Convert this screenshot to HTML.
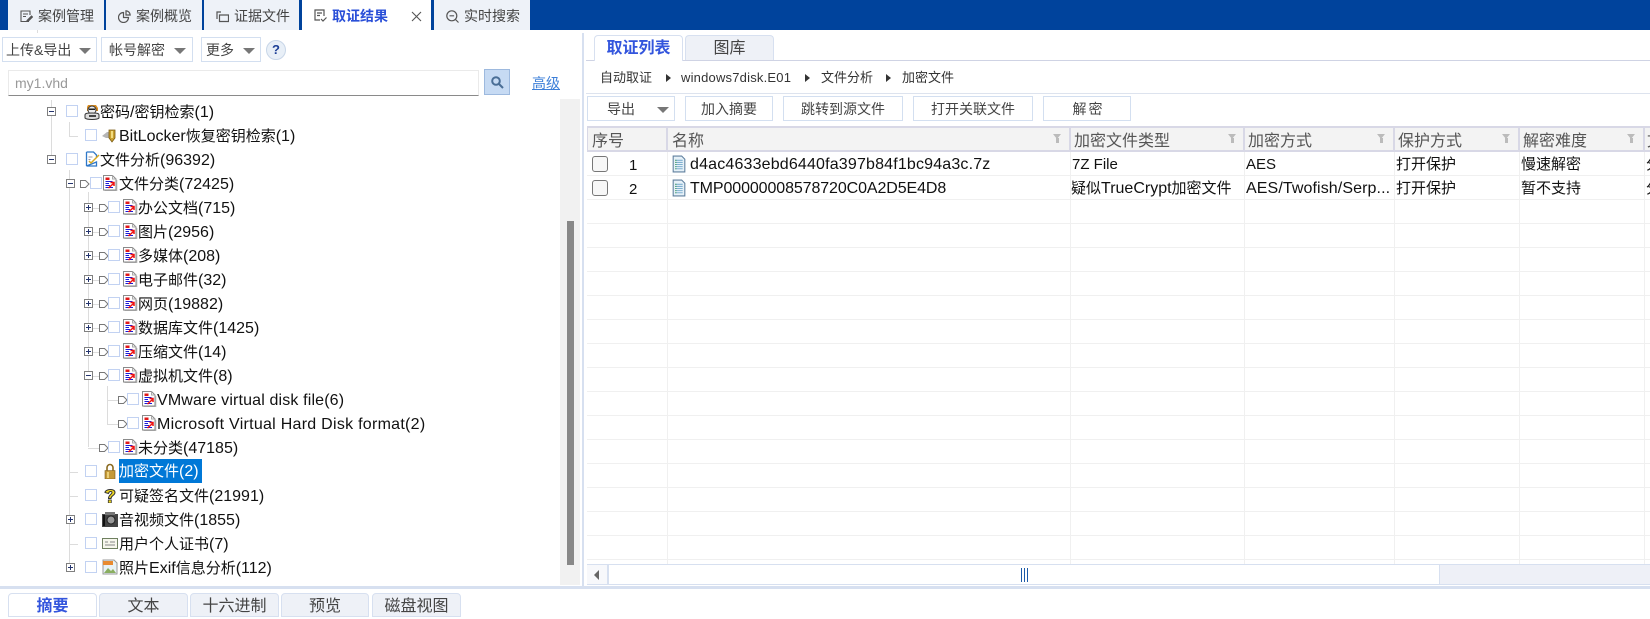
<!DOCTYPE html>
<html lang="zh">
<head>
<meta charset="utf-8">
<title>取证结果</title>
<style>
html,body{margin:0;padding:0;background:#fff;}
body{width:1650px;height:612px;overflow:hidden;position:relative;font-family:"Liberation Sans","Noto Sans CJK SC",sans-serif;color:#222;}
.a{position:absolute;}
.t{position:absolute;white-space:nowrap;}
.tab{position:absolute;top:0;height:30px;background:#eef2f8;}
.tt{position:absolute;top:0;height:32px;line-height:32px;font-size:14px;color:#444;white-space:nowrap;}
.btn{position:absolute;border:1px solid #d3dff0;background:#fff;box-sizing:border-box;font-size:14px;color:#444;white-space:nowrap;}
.tri{position:absolute;width:0;height:0;border-left:6px solid transparent;border-right:6px solid transparent;border-top:6px solid #777;}
.r{position:absolute;height:24px;line-height:24px;font-size:15px;color:#111;white-space:nowrap;margin-top:1px;}
em{font-style:normal;font-size:16px;}
.cb{position:absolute;width:10px;height:10px;border:1px solid #c2d2f2;background:#fff;box-sizing:content-box;}
.pm{position:absolute;width:7px;height:7px;border:1px solid #808080;background:#fff;}
.pm:before{content:"";position:absolute;left:1px;top:3px;width:5px;height:1px;background:#24346e;}
.pm.p:after{content:"";position:absolute;left:3px;top:1px;width:1px;height:5px;background:#24346e;}
.hl{position:absolute;background:#dcdcdc;}
.ic{position:absolute;width:16px;height:16px;}
.th{position:absolute;top:126px;height:26px;line-height:27px;font-size:16px;color:#555;background:#f3f3f3;border-top:2px solid #d8d8e6;border-bottom:2px solid #d8d8e6;box-sizing:border-box;white-space:nowrap;}
.fl{position:absolute;top:6px;width:0;height:0;border-left:4.5px solid transparent;border-right:4.5px solid transparent;border-top:5px solid #bbb;}
.fl:after{content:"";position:absolute;left:-1.500px;top:-1px;width:3px;height:5px;background:#bbb;}
.c{position:absolute;height:24px;line-height:24px;font-size:15px;color:#111;white-space:nowrap;overflow:hidden;}
.g{position:absolute;background:#f0f0f0;}
.btab{position:absolute;top:593px;height:24px;border:1px solid #d7e0f0;border-radius:4px 4px 0 0;background:#eef1f7;box-sizing:border-box;text-align:center;font-size:16px;line-height:25px;color:#444;}
</style>
</head>
<body>
<svg width="0" height="0" style="position:absolute">
<defs>
<symbol id="doc" viewBox="0 0 16 16">
<path d="M1.500.5h9l3.500 3.500v11H1.500z" fill="#fff" stroke="#8a8a8a"/>
<path d="M14.800 5v11H2.500" fill="none" stroke="#b5b5b5"/>
<path d="M10.500.5v3.500H14" fill="none" stroke="#aaa"/>
<path d="M3.500 2.500h4v2.500h-4z" fill="#e01818"/>
<path d="M3.500 6.500h7M3.500 8.500h3.500M3.500 10.500h4.500M3.500 12.500h7.500" stroke="#1a1ad8" stroke-width="1"/>
<path d="M6.500 13l5-4.500M8.500 7.500h3.500v3.500" fill="none" stroke="#ee1111" stroke-width="1.500"/>
</symbol>
<symbol id="ar" viewBox="0 0 10 10">
<path d="M.5 1.500h5l3.500 3.500-3.500 3.500h-5z" fill="#fff" stroke="#777"/>
</symbol>
<symbol id="fdoc" viewBox="0 0 13 17">
<path d="M1 1h8l3 3v12H1z" fill="#e6f1f8" stroke="#5f7f9e"/>
<path d="M3 5h7M3 7h7M3 9h7M3 11h7M3 13h7" stroke="#7fb0d0"/>
<path d="M3 5h1M3 7h1M3 9h1M3 11h1M3 13h1" stroke="#3a9a50"/>
</symbol>
</defs>
</svg>

<!-- top bar -->
<div class="a" style="left:0;top:0;width:1650px;height:30px;background:#00439c"></div>
<div class="tab" style="left:8px;width:96px"></div>
<div class="tab" style="left:106px;width:96px"></div>
<div class="tab" style="left:204px;width:95px"></div>
<div class="tab" style="left:302px;width:129px;background:#fff"></div>
<div class="tab" style="left:434px;width:96px"></div>
<svg class="a" style="left:20px;top:10px" width="13" height="13" viewBox="0 0 13 13" fill="none" stroke="#555" stroke-width="1.100"><path d="M9 11.500H1V1h9v4M3 4h5M3 6.500h3"/><path d="M7 10.500l4.500-4.500 1 1-4.500 4.500H7z" fill="#555"/></svg>
<div class="tt" style="left:38px">案例管理</div>
<svg class="a" style="left:118px;top:10px" width="13" height="13" viewBox="0 0 13 13" fill="none" stroke="#555" stroke-width="1.200"><path d="M5.500 2.500a5 5 0 1 0 5 5h-5z"/><path d="M8 .8a4.500 4.500 0 0 1 4.200 4.200H8z"/></svg>
<div class="tt" style="left:136px">案例概览</div>
<svg class="a" style="left:216px;top:10px" width="13" height="13" viewBox="0 0 13 13" fill="none" stroke="#555" stroke-width="1.200"><path d="M1 9V2h4"/><path d="M3.500 5h9v6.500h-9z"/></svg>
<div class="tt" style="left:234px">证据文件</div>
<svg class="a" style="left:314px;top:9px" width="13" height="13" viewBox="0 0 13 13" fill="none" stroke="#555" stroke-width="1.200"><path d="M6 11H1V1h9v6M3 4h5M3 6.500h3"/><path d="M7 10l2 2 3.500-3.500"/></svg>
<div class="tt" style="left:332px;color:#2a4fd8;font-weight:bold">取证结果</div>
<svg class="a" style="left:411px;top:11px" width="11" height="11" viewBox="0 0 11 11" stroke="#555" stroke-width="1.100"><path d="M1 1l9 9M10 1l-9 9"/></svg>
<svg class="a" style="left:446px;top:10px" width="13" height="13" viewBox="0 0 13 13" fill="none" stroke="#555" stroke-width="1.200"><circle cx="5.800" cy="5.800" r="5"/><path d="M3.500 5.800h4.600M9.500 9.500l3 3"/></svg>
<div class="tt" style="left:464px">实时搜索</div>
<div class="a" style="left:37px;top:30px;width:1px;height:3px;background:#ddd"></div>

<!-- left toolbar -->
<div class="btn" style="left:2px;top:37px;width:95px;height:25px;line-height:24px"><span class="t" style="left:3px;top:0">上传&amp;导出</span><i class="tri" style="left:76px;top:10px"></i></div>
<div class="btn" style="left:101px;top:37px;width:92px;height:25px;line-height:24px"><span class="t" style="left:7px;top:0">帐号解密</span><i class="tri" style="left:72px;top:10px"></i></div>
<div class="btn" style="left:201px;top:37px;width:60px;height:25px;line-height:24px"><span class="t" style="left:4px;top:0">更多</span><i class="tri" style="left:41px;top:10px"></i></div>
<div class="a" style="left:266px;top:40px;width:18px;height:18px;border-radius:50%;border:1px solid #c8d6e8;background:#e8eff7;text-align:center;line-height:18px;font-size:13px;font-weight:bold;color:#1d3f96">?</div>

<!-- search -->
<div class="a" style="left:8px;top:70px;width:471px;height:26px;box-sizing:border-box;border:1px solid #eaeaea;border-bottom:1px solid #8a8a8a;font-size:14px;line-height:24px;color:#999;padding-left:6px">my1.vhd</div>
<div class="a" style="left:484px;top:69px;width:26px;height:26px;box-sizing:border-box;background:#c6daf3;border:1px solid #9db9de"></div>
<svg class="a" style="left:491px;top:76px" width="13" height="13" viewBox="0 0 13 13" fill="none" stroke="#4a6e96" stroke-width="2"><circle cx="5" cy="5" r="3.800"/><path d="M8 8l4 4"/></svg>
<div class="t" style="left:532px;top:71px;height:24px;line-height:24px;font-size:14px;color:#3d7fd8;text-decoration:underline">高级</div>

<!-- tree lines -->
<div class="hl" style="left:51px;top:100px;width:1px;height:60px"></div>
<div class="hl" style="left:69px;top:122px;width:1px;height:14px"></div>
<div class="hl" style="left:69px;top:136px;width:9px;height:1px"></div>
<div class="hl" style="left:69px;top:170px;width:1px;height:398px"></div>
<div class="hl" style="left:88px;top:192px;width:1px;height:255px"></div>
<div class="hl" style="left:107px;top:386px;width:1px;height:38px"></div>
<div class="hl" style="left:107px;top:400px;width:11px;height:1px"></div>
<div class="hl" style="left:107px;top:424px;width:11px;height:1px"></div>
<div class="hl" style="left:88px;top:448px;width:11px;height:1px"></div>
<div class="hl" style="left:70px;top:472px;width:8px;height:1px"></div>
<div class="hl" style="left:70px;top:496px;width:8px;height:1px"></div>
<div class="hl" style="left:70px;top:544px;width:8px;height:1px"></div>
<div class="hl" style="left:93px;top:208px;width:6px;height:1px"></div>
<div class="hl" style="left:93px;top:232px;width:6px;height:1px"></div>
<div class="hl" style="left:93px;top:256px;width:6px;height:1px"></div>
<div class="hl" style="left:93px;top:280px;width:6px;height:1px"></div>
<div class="hl" style="left:93px;top:304px;width:6px;height:1px"></div>
<div class="hl" style="left:93px;top:328px;width:6px;height:1px"></div>
<div class="hl" style="left:93px;top:352px;width:6px;height:1px"></div>
<div class="hl" style="left:93px;top:376px;width:6px;height:1px"></div>

<!-- row 密码 -->
<i class="pm" style="left:47px;top:107px"></i><i class="cb" style="left:66px;top:105px"></i>
<svg class="ic" style="left:84px;top:104px" viewBox="0 0 16 16"><path d="M4 1h8l2 3v3H3V3z" fill="#d98c20"/><circle cx="8" cy="6" r="4" fill="#eee" stroke="#333"/><path d="M5 4.500h6v1.500H5z" fill="#222"/><path d="M1 11c0-2 3-2 7-2s7 0 7 2v3c-2 2-12 2-14 0z" fill="#ddd" stroke="#333"/><path d="M5 11h7v2H5z" fill="#444"/></svg>
<div class="r" style="left:100px;top:100px">密码<em>/</em>密钥检索<em>(1)</em></div>
<!-- BitLocker -->
<i class="cb" style="left:85px;top:129px"></i>
<svg class="ic" style="left:102px;top:128px" viewBox="0 0 16 16"><path d="M0 8l5-4h3v6H4z" fill="#b5b5b5"/><path d="M7 2h6v8l-3 4-3-4z" fill="#c9a030" stroke="#7a5a10" stroke-width=".8"/><path d="M9 3h2v7H9z" fill="#f2dc80"/></svg>
<div class="r" style="left:119px;top:124px"><em>BitLocker</em>恢复密钥检索<em>(1)</em></div>
<!-- 文件分析 -->
<i class="pm" style="left:47px;top:155px"></i><i class="cb" style="left:66px;top:153px"></i>
<svg class="ic" style="left:85px;top:151px" viewBox="0 0 16 16"><path d="M1.500 1h7l3 3v2M11.500 11v4h-10z" fill="#fff" stroke="#2f78c8" stroke-width="1.300"/><path d="M1.500 1v14" stroke="#2f78c8" stroke-width="1.300"/><path d="M4 10l2 2 8-8" fill="none" stroke="#d8a820" stroke-width="1.500"/><path d="M3.500 6h4M3.500 8.500h2" stroke="#99a"/></svg>
<div class="r" style="left:100px;top:148px">文件分析<em>(96392)</em></div>
<!-- 文件分类 -->
<i class="pm" style="left:66px;top:179px"></i><svg class="a" style="left:80px;top:179px" width="10" height="10"><use href="#ar"/></svg><i class="cb" style="left:90px;top:177px"></i><svg class="ic" style="left:102px;top:175px"><use href="#doc"/></svg>
<div class="r" style="left:119px;top:172px">文件分类<em>(72425)</em></div>
<!-- children -->
<i class="pm p" style="left:84px;top:203px"></i><svg class="a" style="left:99px;top:203px" width="10" height="10"><use href="#ar"/></svg><i class="cb" style="left:108px;top:201px"></i><svg class="ic" style="left:122px;top:199px"><use href="#doc"/></svg><div class="r" style="left:138px;top:196px">办公文档<em>(715)</em></div>
<i class="pm p" style="left:84px;top:227px"></i><svg class="a" style="left:99px;top:227px" width="10" height="10"><use href="#ar"/></svg><i class="cb" style="left:108px;top:225px"></i><svg class="ic" style="left:122px;top:223px"><use href="#doc"/></svg><div class="r" style="left:138px;top:220px">图片<em>(2956)</em></div>
<i class="pm p" style="left:84px;top:251px"></i><svg class="a" style="left:99px;top:251px" width="10" height="10"><use href="#ar"/></svg><i class="cb" style="left:108px;top:249px"></i><svg class="ic" style="left:122px;top:247px"><use href="#doc"/></svg><div class="r" style="left:138px;top:244px">多媒体<em>(208)</em></div>
<i class="pm p" style="left:84px;top:275px"></i><svg class="a" style="left:99px;top:275px" width="10" height="10"><use href="#ar"/></svg><i class="cb" style="left:108px;top:273px"></i><svg class="ic" style="left:122px;top:271px"><use href="#doc"/></svg><div class="r" style="left:138px;top:268px">电子邮件<em>(32)</em></div>
<i class="pm p" style="left:84px;top:299px"></i><svg class="a" style="left:99px;top:299px" width="10" height="10"><use href="#ar"/></svg><i class="cb" style="left:108px;top:297px"></i><svg class="ic" style="left:122px;top:295px"><use href="#doc"/></svg><div class="r" style="left:138px;top:292px">网页<em>(19882)</em></div>
<i class="pm p" style="left:84px;top:323px"></i><svg class="a" style="left:99px;top:323px" width="10" height="10"><use href="#ar"/></svg><i class="cb" style="left:108px;top:321px"></i><svg class="ic" style="left:122px;top:319px"><use href="#doc"/></svg><div class="r" style="left:138px;top:316px">数据库文件<em>(1425)</em></div>
<i class="pm p" style="left:84px;top:347px"></i><svg class="a" style="left:99px;top:347px" width="10" height="10"><use href="#ar"/></svg><i class="cb" style="left:108px;top:345px"></i><svg class="ic" style="left:122px;top:343px"><use href="#doc"/></svg><div class="r" style="left:138px;top:340px">压缩文件<em>(14)</em></div>
<i class="pm" style="left:84px;top:371px"></i><svg class="a" style="left:99px;top:371px" width="10" height="10"><use href="#ar"/></svg><i class="cb" style="left:108px;top:369px"></i><svg class="ic" style="left:122px;top:367px"><use href="#doc"/></svg><div class="r" style="left:138px;top:364px">虚拟机文件<em>(8)</em></div>
<svg class="a" style="left:118px;top:395px" width="10" height="10"><use href="#ar"/></svg><i class="cb" style="left:127px;top:393px"></i><svg class="ic" style="left:141px;top:391px"><use href="#doc"/></svg><div class="r" style="left:157px;top:388px"><em style="letter-spacing:.15px">VMware virtual disk file(6)</em></div>
<svg class="a" style="left:118px;top:419px" width="10" height="10"><use href="#ar"/></svg><i class="cb" style="left:127px;top:417px"></i><svg class="ic" style="left:141px;top:415px"><use href="#doc"/></svg><div class="r" style="left:157px;top:412px"><em style="letter-spacing:.27px">Microsoft Virtual Hard Disk format(2)</em></div>
<svg class="a" style="left:99px;top:443px" width="10" height="10"><use href="#ar"/></svg><i class="cb" style="left:108px;top:441px"></i><svg class="ic" style="left:122px;top:439px"><use href="#doc"/></svg><div class="r" style="left:138px;top:436px">未分类<em>(47185)</em></div>
<!-- 加密文件 -->
<i class="cb" style="left:85px;top:465px"></i>
<svg class="ic" style="left:102px;top:463px" viewBox="0 0 16 16"><path d="M5 8V4.500a3 3 0 0 1 6 0V8" fill="none" stroke="#8a6a20" stroke-width="1.600"/><path d="M3 7.500h10V16H3z" fill="#c49a3a" stroke="#7a5a18" stroke-width=".6"/><path d="M5 9h2v6H5z" fill="#ecd078"/></svg>
<div class="a" style="left:119px;top:459px;width:83px;height:24px;background:#0078d7"></div>
<div class="r" style="left:119px;top:459px;color:#fff">加密文件<em>(2)</em></div>
<!-- 可疑 -->
<i class="cb" style="left:85px;top:489px"></i>
<svg class="ic" style="left:102px;top:487px" viewBox="0 0 16 16"><path d="M3 5.500C3 2 13 1 13 5.500c0 3-4 3-4 6H6.500c0-4 3.500-4 3.500-6 0-1.500-3-1.500-3.500 1z" fill="#f0d820" stroke="#333" stroke-width="1"/><rect x="6.300" y="13" width="3" height="3" fill="#f0d820" stroke="#333" stroke-width=".8"/></svg>
<div class="r" style="left:119px;top:484px">可疑签名文件<em>(21991)</em></div>
<!-- 音视频 -->
<i class="pm p" style="left:66px;top:515px"></i><i class="cb" style="left:85px;top:513px"></i>
<svg class="ic" style="left:102px;top:511px" viewBox="0 0 16 16"><path d="M0 3h16v13H0z" fill="#444"/><path d="M3 1h10v3H3z" fill="#777"/><circle cx="9" cy="9" r="4" fill="#999" stroke="#222"/><path d="M1 4h2v11H1z" fill="#111"/></svg>
<div class="r" style="left:119px;top:508px">音视频文件<em>(1855)</em></div>
<!-- 用户 -->
<i class="cb" style="left:85px;top:537px"></i>
<svg class="ic" style="left:102px;top:535px" viewBox="0 0 16 16"><path d="M.5 3.500h15v10H.500z" fill="#f6f6ec" stroke="#6f8060"/><path d="M3 7h3M8 7h5M3 10h10" stroke="#888"/></svg>
<div class="r" style="left:119px;top:532px">用户个人证书<em>(7)</em></div>
<!-- 照片 -->
<i class="pm p" style="left:66px;top:563px"></i><i class="cb" style="left:85px;top:561px"></i>
<svg class="ic" style="left:102px;top:559px" viewBox="0 0 16 16"><path d="M1 1h11l3 3v11H1z" fill="#e8f2f6" stroke="#999"/><path d="M1 2h10v4H1z" fill="#e88a30"/><path d="M2 14l4-5 3 3 2-2 3 4z" fill="#8aae60"/></svg>
<div class="r" style="left:119px;top:556px">照片<em>Exif</em>信息分析<em>(112)</em></div>

<!-- tree scrollbar -->
<div class="a" style="left:560px;top:99px;width:20px;height:486px;background:#f1f1f1"></div>
<div class="a" style="left:567px;top:221px;width:7px;height:344px;background:#888"></div>
<!-- vertical divider -->
<div class="a" style="left:582px;top:33px;width:2px;height:553px;background:#d7e0f0"></div>

<!-- right tabs -->
<div class="a" style="left:586px;top:60px;width:1064px;height:1px;background:#cfd3e4"></div>
<div class="a" style="left:594px;top:35px;width:89px;height:26px;box-sizing:border-box;background:#fff;border:1px solid #d7e0f0;border-bottom:none;border-radius:4px 4px 0 0;text-align:center;font-size:16px;font-weight:bold;line-height:26px;color:#3355dd">取证列表</div>
<div class="a" style="left:685px;top:35px;width:89px;height:25px;box-sizing:border-box;background:#eef1f7;border:1px solid #d7e0f0;border-bottom:none;border-radius:4px 4px 0 0;text-align:center;font-size:16px;line-height:26px;color:#444">图库</div>

<!-- breadcrumb -->
<div class="t" style="left:600px;top:66px;height:24px;line-height:24px;font-size:13px;color:#333">自动取证</div>
<div class="a" style="left:666px;top:74px;border-left:5px solid #333;border-top:4.500px solid transparent;border-bottom:4.500px solid transparent"></div>
<div class="t" style="left:681px;top:66px;height:24px;line-height:24px;font-size:13px;color:#333;letter-spacing:.2px">windows7disk.E01</div>
<div class="a" style="left:805px;top:74px;border-left:5px solid #333;border-top:4.500px solid transparent;border-bottom:4.500px solid transparent"></div>
<div class="t" style="left:821px;top:66px;height:24px;line-height:24px;font-size:13px;color:#333">文件分析</div>
<div class="a" style="left:886px;top:74px;border-left:5px solid #333;border-top:4.500px solid transparent;border-bottom:4.500px solid transparent"></div>
<div class="t" style="left:902px;top:66px;height:24px;line-height:24px;font-size:13px;color:#333">加密文件</div>
<div class="a" style="left:586px;top:93px;width:1064px;height:1px;background:#dde3ee"></div>

<!-- action buttons -->
<div class="btn" style="left:587px;top:96px;width:88px;height:25px;line-height:24px"><span class="t" style="left:19px;top:0">导出</span><i class="tri" style="left:69px;top:10px"></i></div>
<div class="btn" style="left:685px;top:96px;width:88px;height:25px;line-height:24px;text-align:center">加入摘要</div>
<div class="btn" style="left:783px;top:96px;width:120px;height:25px;line-height:24px;text-align:center">跳转到源文件</div>
<div class="btn" style="left:913px;top:96px;width:120px;height:25px;line-height:24px;text-align:center">打开关联文件</div>
<div class="btn" style="left:1043px;top:96px;width:88px;height:25px;line-height:24px;text-align:center;letter-spacing:2px;padding-left:3px">解密</div>

<!-- table grid -->
<div class="g" style="left:587px;top:175px;width:1063px;height:1px"></div>
<div class="g" style="left:587px;top:199px;width:1063px;height:1px"></div>
<div class="g" style="left:587px;top:223px;width:1063px;height:1px"></div>
<div class="g" style="left:587px;top:247px;width:1063px;height:1px"></div>
<div class="g" style="left:587px;top:271px;width:1063px;height:1px"></div>
<div class="g" style="left:587px;top:295px;width:1063px;height:1px"></div>
<div class="g" style="left:587px;top:319px;width:1063px;height:1px"></div>
<div class="g" style="left:587px;top:343px;width:1063px;height:1px"></div>
<div class="g" style="left:587px;top:367px;width:1063px;height:1px"></div>
<div class="g" style="left:587px;top:391px;width:1063px;height:1px"></div>
<div class="g" style="left:587px;top:415px;width:1063px;height:1px"></div>
<div class="g" style="left:587px;top:439px;width:1063px;height:1px"></div>
<div class="g" style="left:587px;top:463px;width:1063px;height:1px"></div>
<div class="g" style="left:587px;top:487px;width:1063px;height:1px"></div>
<div class="g" style="left:587px;top:511px;width:1063px;height:1px"></div>
<div class="g" style="left:587px;top:535px;width:1063px;height:1px"></div>
<div class="g" style="left:587px;top:559px;width:1063px;height:1px"></div>
<div class="g" style="left:667px;top:152px;width:1px;height:412px"></div>
<div class="g" style="left:1070px;top:152px;width:1px;height:412px"></div>
<div class="g" style="left:1244px;top:152px;width:1px;height:412px"></div>
<div class="g" style="left:1394px;top:152px;width:1px;height:412px"></div>
<div class="g" style="left:1519px;top:152px;width:1px;height:412px"></div>
<div class="g" style="left:1644px;top:152px;width:1px;height:412px"></div>

<!-- table head -->
<div class="th" style="left:587px;width:81px;border-left:1px solid #d8d8e6;border-right:2px solid #d8d8e6;padding-left:4px">序号</div>
<div class="th" style="left:668px;width:403px;border-right:2px solid #d8d8e6;padding-left:4px">名称<i class="fl" style="left:385px"></i></div>
<div class="th" style="left:1071px;width:174px;border-right:2px solid #d8d8e6;padding-left:3px">加密文件类型<i class="fl" style="left:157px"></i></div>
<div class="th" style="left:1245px;width:150px;border-right:2px solid #d8d8e6;padding-left:3px">加密方式<i class="fl" style="left:132px"></i></div>
<div class="th" style="left:1395px;width:125px;border-right:2px solid #d8d8e6;padding-left:3px">保护方式<i class="fl" style="left:107px"></i></div>
<div class="th" style="left:1520px;width:125px;border-right:2px solid #d8d8e6;padding-left:3px">解密难度<i class="fl" style="left:107px"></i></div>
<div class="th" style="left:1645px;width:5px;overflow:hidden;padding-left:2px">文件</div>

<!-- rows -->
<div class="a" style="left:592px;top:156px;width:16px;height:16px;box-sizing:border-box;border:1px solid #777;border-radius:3px;background:#f7f7f7"></div>
<div class="c" style="left:629px;top:154px">1</div>
<svg class="a" style="left:672px;top:155px" width="14" height="18"><use href="#fdoc"/></svg>
<div class="c" style="left:690px;top:153px;font-size:16px;letter-spacing:.17px">d4ac4633ebd6440fa397b84f1bc94a3c.7z</div>
<div class="c" style="left:1072px;top:153px">7Z File</div>
<div class="c" style="left:1246px;top:153px">AES</div>
<div class="c" style="left:1396px;top:153px">打开保护</div>
<div class="c" style="left:1521px;top:153px">慢速解密</div>
<div class="c" style="left:1646px;top:153px;width:4px">分析</div>

<div class="a" style="left:592px;top:180px;width:16px;height:16px;box-sizing:border-box;border:1px solid #777;border-radius:3px;background:#f7f7f7"></div>
<div class="c" style="left:629px;top:178px">2</div>
<svg class="a" style="left:672px;top:179px" width="14" height="18"><use href="#fdoc"/></svg>
<div class="c" style="left:690px;top:177px;font-size:16px;letter-spacing:-.1px">TMP00000008578720C0A2D5E4D8</div>
<div class="c" style="left:1071px;top:177px;width:172px">疑似<em>TrueCrypt</em>加密文件</div>
<div class="c" style="left:1246px;top:177px;width:146px;font-size:16px;letter-spacing:.1px">AES/Twofish/Serp...</div>
<div class="c" style="left:1396px;top:177px">打开保护</div>
<div class="c" style="left:1521px;top:177px">暂不支持</div>
<div class="c" style="left:1646px;top:177px;width:4px">分析</div>

<!-- h scrollbar -->
<div class="a" style="left:587px;top:564px;width:1063px;height:21px;box-sizing:border-box;background:#eef0f7;border-top:1px solid #d7e0f0;border-bottom:1px solid #d7e0f0"></div>
<div class="a" style="left:587px;top:564px;width:21px;height:21px;box-sizing:border-box;background:#f7f8fb;border:1px solid #d7e0f0;border-left:none"></div>
<div class="a" style="left:594px;top:570px;border-right:5px solid #666;border-top:5px solid transparent;border-bottom:5px solid transparent"></div>
<div class="a" style="left:608px;top:564px;width:832px;height:21px;box-sizing:border-box;background:#fff;border:1px solid #d7e0f0"></div>
<div class="a" style="left:1021px;top:568px;width:1px;height:14px;background:#1c5aa8"></div>
<div class="a" style="left:1024px;top:568px;width:1px;height:14px;background:#1c5aa8"></div>
<div class="a" style="left:1027px;top:568px;width:1px;height:14px;background:#1c5aa8"></div>

<!-- bottom -->
<div class="a" style="left:0;top:586px;width:1650px;height:3px;background:#d7e0f0"></div>
<div class="btab" style="left:8px;width:89px;background:#fff;color:#3355dd;font-weight:bold">摘要</div>
<div class="btab" style="left:99px;width:89px">文本</div>
<div class="btab" style="left:190px;width:89px">十六进制</div>
<div class="btab" style="left:281px;width:88px">预览</div>
<div class="btab" style="left:372px;width:89px">磁盘视图</div>
</body>
</html>
